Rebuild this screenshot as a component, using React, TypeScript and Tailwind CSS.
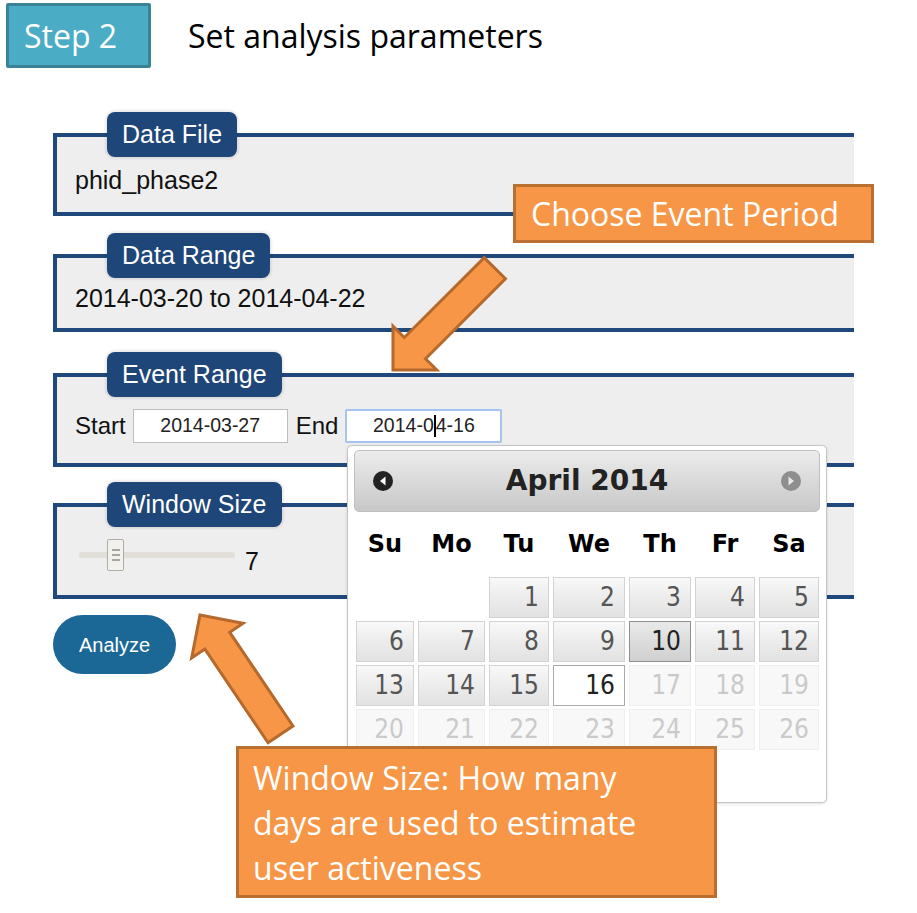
const rows: (number | null)[][] = [
  [null, null, 1, 2, 3, 4, 5],
  [6, 7, 8, 9, 10, 11, 12],
  [13, 14, 15, 16, 17, 18, 19],
  [20, 21, 22, 23, 24, 25, 26],
];

const weekDays = ["Su", "Mo", "Tu", "We", "Th", "Fr", "Sa"];

function DayCell({ day }: { day: number | null }) {
  if (day === null) return <div />;
  let look =
    "border-[#d3d3d3] bg-linear-to-b from-[#f9f9f9] via-[#ececec] to-[#e2e2e2] text-[#555]";
  if (day === 10)
    look = "border-[#8f8f8f] bg-linear-to-b from-[#eaeaea] via-[#dcdcdc] to-[#d0d0d0] text-[#212121]";
  if (day === 16) look = "border-[#aaaaaa] bg-white text-[#212121]";
  if (day > 16) look = "border-[#efefef] bg-[#f8f8f8] text-[#cacaca]";
  return (
    <div className={`h-[41px] border flex items-center justify-end pr-[9px] text-[26px] ${look}`}>
      {day}
    </div>
  );
}

function Panel({
  title,
  className,
  children,
}: {
  title: string;
  className: string;
  children: React.ReactNode;
}) {
  return (
    <fieldset
      className={`w-[801px] border-y-4 border-l-4 border-r-0 border-[#1f487c] bg-[#eeeeee] pl-[18px] ${className}`}
    >
      <legend className="ml-[32px] px-[15px] h-[45px] leading-[45px] rounded-[8px] bg-[#1f4678] text-white text-[25px] shadow-[0_0_2px_2px_rgba(0,0,0,0.08)]">
        {title}
      </legend>
      {children}
    </fieldset>
  );
}

// arrow drawn with tip at 0,0 pointing along -x, tail at x=144
const arrowPts = "0,0 31,-31 31,-15 144,-15 144,15 31,15 31,31";

export default function App() {
  return (
    <div className="relative w-[917px] h-[913px] overflow-hidden bg-white pt-[3px]">
      {/* Header */}
      <div className="flex items-center font-['Open_Sans',sans-serif] text-[32px]">
        <div className="ml-[6px] w-[145px] h-[65px] border-[3px] border-[#3a8396] bg-[#4bacc6] rounded-[2px] flex items-center pl-[15px] text-white">
          Step 2
        </div>
        <div className="ml-[37px] text-black">Set analysis parameters</div>
      </div>

      {/* Form */}
      <div className="ml-[53px] mt-[44px] flex flex-col font-['Liberation_Sans',Arial,sans-serif] text-[#111]">
        <Panel title="Data File" className="pt-[9px] pb-[17px]">
          <div className="text-[25px] leading-[29px]">phid_phase2</div>
        </Panel>

        <Panel title="Data Range" className="mt-[17px] pt-[6px] pb-[15px]">
          <div className="text-[25px] leading-[29px]">2014-03-20 to 2014-04-22</div>
        </Panel>

        <Panel title="Event Range" className="mt-[20px] pt-[12px] pb-[20px]">
          <div className="flex items-center h-[34px] text-[24px]">
            <span>Start</span>
            <div className="ml-[7px] w-[155px] h-[34px] border border-[#bdbdbd] bg-white flex items-center justify-center text-[19.5px] text-[#222]">
              2014-03-27
            </div>
            <span className="ml-[8px]">End</span>
            <div className="ml-[7px] w-[157px] h-[34px] border-2 border-[#a6c4ee] rounded-[2px] bg-white flex items-center justify-center text-[19.5px] text-[#222]">
              2014-0
              <span className="inline-block w-[2px] h-[22px] bg-black" />
              4-16
            </div>
          </div>
        </Panel>

        <Panel title="Window Size" className="mt-[15px] pt-[12px] pb-[24px]">
          <div className="flex items-start h-[32px]">
            <div className="ml-[4px] w-[156px] h-[32px] flex items-center">
              <div className="w-full h-[6px] rounded-[3px] bg-[#e2ded8] flex items-center">
                <div className="ml-[28px] w-[17px] h-[32px] rounded-[2px] border border-[#b0aca6] bg-[#f3f1ee] flex flex-col items-center justify-center gap-[3px]">
                  <div className="w-[8px] h-[2px] bg-[#a8a49e]" />
                  <div className="w-[8px] h-[2px] bg-[#a8a49e]" />
                  <div className="w-[8px] h-[2px] bg-[#a8a49e]" />
                </div>
              </div>
            </div>
            <div className="ml-[10px] mt-[12px] text-[25px] leading-[20px]">7</div>
          </div>
        </Panel>

        <button className="mt-[16px] w-[123px] h-[59px] rounded-full bg-[#1b6896] text-white text-[20px]">
          Analyze
        </button>
      </div>

      {/* Date picker popup */}
      <div className="absolute left-[347px] top-[445px] w-[480px] h-[358px] border border-[#c5c5c5] rounded-[5px] bg-white px-[6px] pt-[4px] shadow-[0_1px_3px_rgba(0,0,0,0.12)] font-['DejaVu_Sans',sans-serif]">
        <div className="h-[62px] rounded-[5px] border border-[#c0c0c0] bg-linear-to-b from-[#ececec] to-[#c8c8c8] flex items-center justify-between px-[17px]">
          <svg width="22" height="22" viewBox="0 0 22 22">
            <circle cx="11" cy="11" r="10" fill="#222" />
            <path d="M13.5 6.5 L8 11 L13.5 15.5 Z" fill="#fff" />
          </svg>
          <div className="text-[28px] font-bold text-[#222]">April 2014</div>
          <svg width="22" height="22" viewBox="0 0 22 22">
            <circle cx="11" cy="11" r="10" fill="#8e8e8e" />
            <path d="M8.5 6.5 L14 11 L8.5 15.5 Z" fill="#e8e8e8" />
          </svg>
        </div>

        <div className="ml-[2px] mt-[17px] mb-[18px] grid grid-cols-[58px_67px_60px_72px_62px_60px_60px] gap-x-[4px]">
          {weekDays.map((d) => (
            <div key={d} className="text-center text-[24px] leading-[30px] font-bold text-black">
              {d}
            </div>
          ))}
        </div>

        <div className="ml-[2px] grid grid-cols-[58px_67px_60px_72px_62px_60px_60px] gap-x-[4px] gap-y-[3px] font-['DejaVu_Sans_Condensed','DejaVu_Sans',sans-serif]">
          {rows.flat().map((d, i) => (
            <DayCell key={i} day={d} />
          ))}
        </div>
      </div>

      {/* Arrows */}
      <svg className="absolute left-0 top-0 pointer-events-none" width="917" height="913">
        <polygon
          points={arrowPts}
          transform="translate(393 370) rotate(-45)"
          fill="#f79646"
          stroke="#b5692d"
          strokeWidth="3"
        />
        <polygon
          points={arrowPts}
          transform="translate(200 615) rotate(56)"
          fill="#f79646"
          stroke="#b5692d"
          strokeWidth="3"
        />
      </svg>

      {/* Callouts */}
      <div className="absolute left-[513px] top-[184px] w-[361px] h-[59px] border-[3px] border-[#b96f30] bg-[#f79646] flex items-center pl-[15px] font-['Open_Sans',sans-serif] text-[32px] text-white">
        Choose Event Period
      </div>
      <div className="absolute left-[236px] top-[746px] w-[481px] h-[152px] border-[3px] border-[#b96f30] bg-[#f79646] pl-[14px] pt-[6px] font-['Open_Sans',sans-serif] text-[32px] leading-[45px] text-white">
        Window Size: How many
        <br />
        days are used to estimate
        <br />
        user activeness
      </div>
    </div>
  );
}
